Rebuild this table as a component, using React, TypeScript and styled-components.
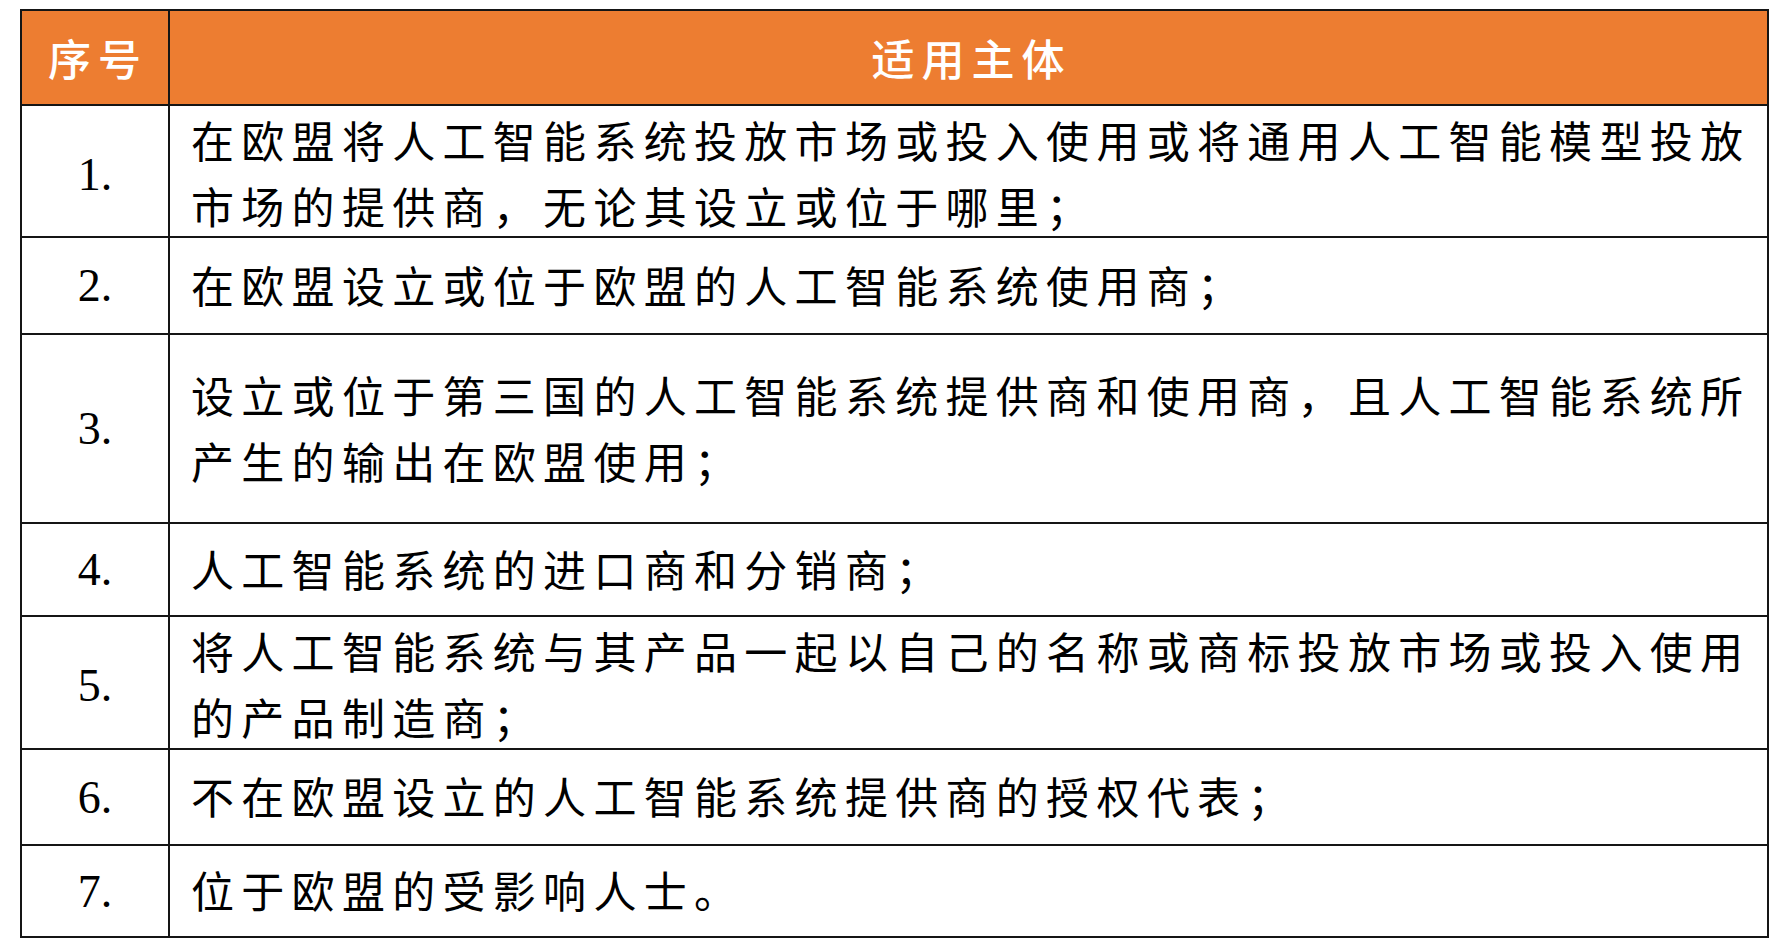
import React from "react";
import styled, { createGlobalStyle } from "styled-components";

const GlobalStyle = createGlobalStyle`
  html, body {
    margin: 0;
    padding: 0;
    background: #ffffff;
  }
  body {
    font-family: "Noto Sans CJK SC", "Liberation Serif", serif;
    color: #000;
  }
`;

const rows = [
  {
    no: "1.",
    text: "在欧盟将人工智能系统投放市场或投入使用或将通用人工智能模型投放市场的提供商，无论其设立或位于哪里；",
    height: 132,
  },
  { no: "2.", text: "在欧盟设立或位于欧盟的人工智能系统使用商；", height: 97 },
  {
    no: "3.",
    text: "设立或位于第三国的人工智能系统提供商和使用商，且人工智能系统所产生的输出在欧盟使用；",
    height: 189,
  },
  { no: "4.", text: "人工智能系统的进口商和分销商；", height: 93 },
  {
    no: "5.",
    text: "将人工智能系统与其产品一起以自己的名称或商标投放市场或投入使用的产品制造商；",
    height: 133,
  },
  { no: "6.", text: "不在欧盟设立的人工智能系统提供商的授权代表；", height: 96 },
  { no: "7.", text: "位于欧盟的受影响人士。", height: 92 },
];

const Page = styled.div`
  padding: 9px 0 0 20px;
`;

const Table = styled.div`
  width: 1749px;
  box-sizing: border-box;
  border: 2px solid #151515;
`;

const Row = styled.div<{ $h: number; $head?: boolean }>`
  display: grid;
  grid-template-columns: 148px 1fr;
  box-sizing: border-box;
  height: ${({ $h }) => $h}px;
  border-top: ${({ $head }) => ($head ? "none" : "2px solid #151515")};
  background: ${({ $head }) => ($head ? "#ed7d31" : "#ffffff")};
`;

const HeadCell = styled.div<{ $first?: boolean }>`
  display: flex;
  align-items: center;
  justify-content: center;
  padding-left: 6px;
  padding-bottom: 2px;
  color: #ffffff;
  font-family: "Noto Sans CJK SC", sans-serif;
  font-size: 43px;
  font-weight: 500;
  letter-spacing: 7px;
  border-right: ${({ $first }) => ($first ? "2px solid #151515" : "none")};
`;

const NoCell = styled.div`
  display: flex;
  align-items: center;
  justify-content: center;
  border-right: 2px solid #151515;
  font-family: "Liberation Serif", "Times New Roman", serif;
  font-size: 46px;
  color: #000;
`;

const TextCell = styled.div`
  display: flex;
  align-items: center;
  padding: 0 16px 4px 21px;
  font-family: "Noto Sans CJK SC", sans-serif;
  font-size: 43px;
  font-weight: 400;
  letter-spacing: 7.3px;
  line-height: 66px;
  color: #000;
`;

export default function App() {
  return (
    <Page>
      <GlobalStyle />
      <Table>
        <Row $h={93} $head>
          <HeadCell $first>序号</HeadCell>
          <HeadCell>适用主体</HeadCell>
        </Row>
        {rows.map((r) => (
          <Row key={r.no} $h={r.height}>
            <NoCell>{r.no}</NoCell>
            <TextCell>{r.text}</TextCell>
          </Row>
        ))}
      </Table>
    </Page>
  );
}
